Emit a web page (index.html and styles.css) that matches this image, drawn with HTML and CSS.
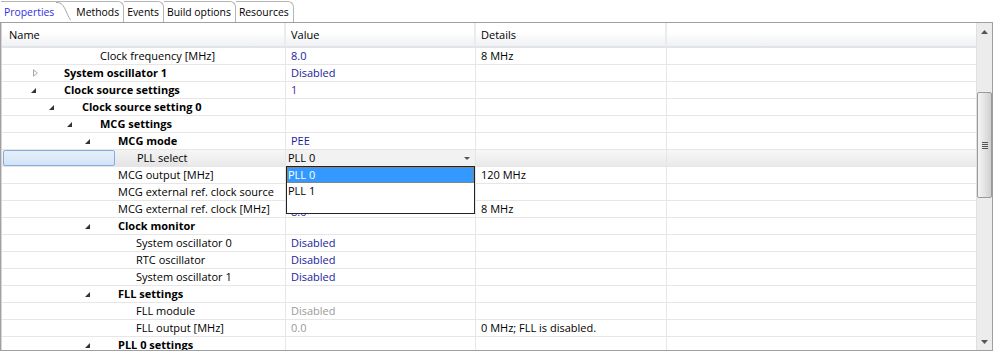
FILE: index.html
```html
<!DOCTYPE html>
<html lang="en">
<head>
    <meta charset="UTF-8">
    <title>Component Inspector</title>
    <link rel="stylesheet" href="styles.css">
</head>
<body>
    <div class="tabs">
        <div class="tab active">Properties
            <svg class="tab-curve" width="20" height="22" viewBox="0 0 20 22"><path d="M0 1.5 C6 1.5 7 4 10 10 C13 17 15 21.5 20 21.5" fill="none" stroke="#a8a8a8"/></svg>
        </div>
        <div class="tab">Methods</div>
        <div class="tab">Events</div>
        <div class="tab">Build options</div>
        <div class="tab">Resources</div>
    </div>

    <div class="panel">
        <div class="grid">
            <div class="row head">
                <div class="cell name">Name</div>
                <div class="cell value">Value</div>
                <div class="cell details">Details</div>
                <div class="cell fill"></div>
            </div>

            <div class="row"><div class="cell name lv2">Clock frequency [MHz]</div><div class="cell value val">8.0</div><div class="cell details">8 MHz</div><div class="cell fill"></div></div>
            <div class="row"><div class="cell name lv0 group"><span class="tw closed"></span>System oscillator 1</div><div class="cell value val">Disabled</div><div class="cell details"></div><div class="cell fill"></div></div>
            <div class="row"><div class="cell name lv0 group"><span class="tw"></span>Clock source settings</div><div class="cell value val num">1</div><div class="cell details"></div><div class="cell fill"></div></div>
            <div class="row"><div class="cell name lv1 group"><span class="tw"></span>Clock source setting 0</div><div class="cell value"></div><div class="cell details"></div><div class="cell fill"></div></div>
            <div class="row"><div class="cell name lv2 group"><span class="tw"></span>MCG settings</div><div class="cell value"></div><div class="cell details"></div><div class="cell fill"></div></div>
            <div class="row"><div class="cell name lv3 group"><span class="tw"></span>MCG mode</div><div class="cell value val">PEE</div><div class="cell details"></div><div class="cell fill"></div></div>
            <div class="row selected">
                <div class="cell name lv4"><span class="sel-lead"></span><span class="sel-label">PLL select</span></div>
                <div class="cell value combo">PLL 0<span class="combo-arrow"></span></div>
                <div class="cell details"></div>
                <div class="cell fill"></div>
            </div>
            <div class="row"><div class="cell name lv3">MCG output [MHz]</div><div class="cell value"></div><div class="cell details">120 MHz</div><div class="cell fill"></div></div>
            <div class="row"><div class="cell name lv3">MCG external ref. clock source</div><div class="cell value"></div><div class="cell details"></div><div class="cell fill"></div></div>
            <div class="row"><div class="cell name lv3">MCG external ref. clock [MHz]</div><div class="cell value val peek">8.0</div><div class="cell details">8 MHz</div><div class="cell fill"></div></div>
            <div class="row"><div class="cell name lv3 group"><span class="tw"></span>Clock monitor</div><div class="cell value"></div><div class="cell details"></div><div class="cell fill"></div></div>
            <div class="row"><div class="cell name lv4">System oscillator 0</div><div class="cell value val">Disabled</div><div class="cell details"></div><div class="cell fill"></div></div>
            <div class="row"><div class="cell name lv4">RTC oscillator</div><div class="cell value val">Disabled</div><div class="cell details"></div><div class="cell fill"></div></div>
            <div class="row"><div class="cell name lv4">System oscillator 1</div><div class="cell value val">Disabled</div><div class="cell details"></div><div class="cell fill"></div></div>
            <div class="row"><div class="cell name lv3 group"><span class="tw"></span>FLL settings</div><div class="cell value"></div><div class="cell details"></div><div class="cell fill"></div></div>
            <div class="row"><div class="cell name lv4">FLL module</div><div class="cell value off">Disabled</div><div class="cell details"></div><div class="cell fill"></div></div>
            <div class="row"><div class="cell name lv4">FLL output [MHz]</div><div class="cell value off">0.0</div><div class="cell details">0 MHz; FLL is disabled.</div><div class="cell fill"></div></div>
            <div class="row"><div class="cell name lv3 group"><span class="tw"></span>PLL 0 settings</div><div class="cell value"></div><div class="cell details"></div><div class="cell fill"></div></div>

            <div class="dropdown">
                <div class="opt current">PLL 0</div>
                <div class="opt">PLL 1</div>
            </div>
        </div>

        <div class="scrollbar">
            <div class="sb-btn"><svg width="9" height="6" viewBox="0 0 9 6"><path d="M4.5 1 L8 5 L1 5 Z" fill="#555"/></svg></div>
            <div class="sb-track">
                <div class="sb-thumb"><span class="grip"></span></div>
            </div>
            <div class="sb-btn"><svg width="9" height="6" viewBox="0 0 9 6"><path d="M1 1 L8 1 L4.5 5 Z" fill="#555"/></svg></div>
        </div>
    </div>
</body>
</html>
```

FILE: styles.css
```css
body {
    margin: 0;
    font-family: "Open Sans", "Noto Sans", sans-serif;
    font-size: 11px;
    color: #000;
    background: #fff;
}
.tabs {
    display: flex;
    height: 22px;
    align-items: flex-end;
    padding-left: 1px;
    font-size: 10.4px;
}
.tab {
    position: relative;
    height: 21px;
    line-height: 20px;
    padding: 0 4px 0 3px;
    border: 1px solid #b4b4b4;
    border-bottom: none;
    border-left: none;
    border-radius: 0 6px 0 0;
    background: #fff;
    box-sizing: border-box;
}
.tab.active {
    color: #2f2fe6;
    border: none;
    border-top: 1px solid #b4b4b4;
    border-radius: 0;
    padding: 0 18px 0 3px;
    height: 21px;
    margin-right: -1px;
}
.tab-curve {
    position: absolute;
    right: -4px;
    top: -1px;
}
.tab.active + .tab {
    padding-left: 5px;
}

.panel {
    display: flex;
    width: 991px;
    height: 327px;
    border: 1px solid #a0a0a0;
    overflow: hidden;
}
.grid {
    position: relative;
    flex: 1;
    overflow: hidden;
    border-left: 1px solid #d6d6d6;
}
.row {
    display: flex;
    height: 17px;
    border-bottom: 1px solid #e6e6e6;
    box-sizing: border-box;
}
.cell {
    line-height: 16px;
    white-space: nowrap;
    overflow: hidden;
    border-right: 1px solid #e6e6e6;
    box-sizing: border-box;
}
.name { width: 284px; position: relative; }
.value { width: 190px; padding-left: 5px; }
.details { width: 191px; padding-left: 5px; }
.fill { flex: 1; border-right: none; }

.head {
    height: 25px;
    border-bottom: 2px solid #e2e4e8;
    background: linear-gradient(#ffffff, #ffffff 40%, #f0f1f4);
}
.head .cell {
    line-height: 24px;
    border-right: 2px solid #eaebee;
}
.head .name { padding-left: 7px; }
.head .fill { border-right: none; }

.lv0 { padding-left: 62px; }
.lv1 { padding-left: 80px; }
.lv2 { padding-left: 98px; }
.lv3 { padding-left: 116px; }
.lv4 { padding-left: 134px; }
.group { font-weight: bold; }

.tw {
    position: absolute;
    top: 6px;
    width: 0;
    height: 0;
    border-left: 5px solid transparent;
    border-bottom: 5px solid #333;
}
.lv0 .tw { left: 29px; }
.lv1 .tw { left: 47px; }
.lv2 .tw { left: 65px; }
.lv3 .tw { left: 83px; }
.tw.closed {
    top: 4px;
    left: 31px;
    border: 4px solid transparent;
    border-left: 5px solid #a8a8a8;
    border-right: none;
    width: 0;
    height: 0;
}
.tw.closed::after {
    content: "";
    position: absolute;
    left: -4px;
    top: -2px;
    border: 2px solid transparent;
    border-left: 3px solid #fff;
    border-right: none;
}

.val { color: #1c1c9c; }
.num { color: #5a1aa0; }
.off { color: #9a9a9a; }
.peek { line-height: 22px; }

.selected {
    background: linear-gradient(#f7f7f7, #e9e9e9);
}
.selected .name {
    padding-left: 0;
    display: flex;
}
.sel-lead {
    width: 110px;
    margin-left: 1px;
    border: 1px solid #84acdd;
    border-radius: 2px;
    background: linear-gradient(#e6f0fb, #d2e4f8);
}
.sel-label {
    width: 51px;
    padding-left: 22px;
    background: linear-gradient(#f3f3f3, #e4e4e4);
}
.combo {
    position: relative;
    background: #f2f2f2;
    padding-left: 2px;
}
.combo-arrow {
    position: absolute;
    right: 5px;
    top: 7px;
    border: 3px solid transparent;
    border-top: 3px solid #555;
}

.dropdown {
    position: absolute;
    left: 284px;
    top: 143px;
    width: 189px;
    height: 48px;
    border: 1px solid #222;
    background: #fff;
    box-sizing: border-box;
}
.opt {
    height: 16px;
    line-height: 16px;
    padding-left: 1px;
}
.opt.current {
    background: #3399ff;
    color: #fff;
    outline: 1px dotted #c47a1a;
    outline-offset: -1px;
}

.scrollbar {
    width: 15px;
    display: flex;
    flex-direction: column;
    background: #ececec;
    border-left: 1px solid #e0e0e0;
}
.sb-btn {
    height: 17px;
    display: flex;
    align-items: center;
    justify-content: center;
}
.sb-track {
    flex: 1;
    position: relative;
}
.sb-thumb {
    position: absolute;
    left: 0;
    right: 0;
    top: 52px;
    height: 104px;
    border: 1px solid #9a9a9a;
    border-radius: 2px;
    background: linear-gradient(90deg, #f4f4f4, #e0e0e0 60%, #cfcfcf);
    display: flex;
    align-items: center;
    justify-content: center;
}
.grip {
    width: 6px;
    height: 7px;
    background: repeating-linear-gradient(#555 0, #555 1px, transparent 1px, transparent 2px);
}
```
